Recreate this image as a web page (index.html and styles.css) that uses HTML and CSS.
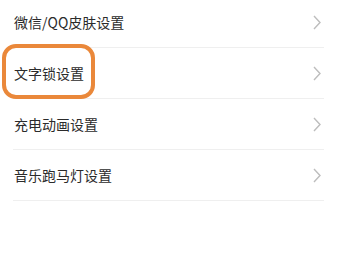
FILE: index.html
```html
<!DOCTYPE html>
<html lang="zh">
<head>
<meta charset="utf-8">
<link rel="stylesheet" href="styles.css">
</head>
<body>
<ul class="list">
  <li class="row"><span class="label">微信/QQ皮肤设置</span><svg class="chev" viewBox="0 0 8 15" width="8" height="15"><path d="M1 1 L7 7.5 L1 14" fill="none" stroke="#bdbdbd" stroke-width="1.4"/></svg></li>
  <li class="row"><span class="label">文字锁设置</span><svg class="chev" viewBox="0 0 8 15" width="8" height="15"><path d="M1 1 L7 7.5 L1 14" fill="none" stroke="#bdbdbd" stroke-width="1.4"/></svg><span class="mark"></span></li>
  <li class="row"><span class="label">充电动画设置</span><svg class="chev" viewBox="0 0 8 15" width="8" height="15"><path d="M1 1 L7 7.5 L1 14" fill="none" stroke="#bdbdbd" stroke-width="1.4"/></svg></li>
  <li class="row"><span class="label">音乐跑马灯设置</span><svg class="chev" viewBox="0 0 8 15" width="8" height="15"><path d="M1 1 L7 7.5 L1 14" fill="none" stroke="#bdbdbd" stroke-width="1.4"/></svg></li>
</ul>
</body>
</html>
```
FILE: styles.css
```css
html, body {
  margin: 0;
  padding: 0;
  background: #ffffff;
}
body {
  font-family: "Noto Sans CJK SC", "Noto Sans", sans-serif;
  overflow: hidden;
}
.list {
  list-style: none;
  margin: -3px 14px 0 13px;
  padding: 0;
}
.row {
  position: relative;
  display: flex;
  align-items: center;
  justify-content: space-between;
  height: 50px;
  border-bottom: 1px solid #efefef;
  padding: 0 3px 0 1px;
}
.label {
  font-size: 14px;
  color: #2b2b2b;
  line-height: 20px;
}
.chev {
  display: block;
  margin-top: 1px;
}
.mark {
  position: absolute;
  left: -11px;
  top: -4px;
  width: 85px;
  height: 47px;
  border: 4px solid #ea883a;
  border-radius: 14px;
  pointer-events: none;
}
```
